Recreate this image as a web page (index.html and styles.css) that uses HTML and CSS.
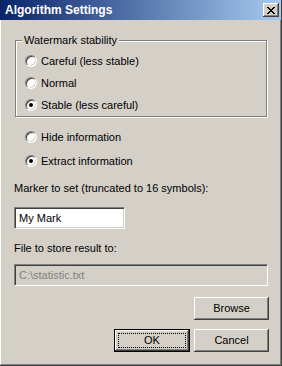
FILE: index.html
```html
<!DOCTYPE html>
<html lang="en">
<head>
  <meta charset="utf-8">
  <title>Algorithm Settings</title>
  <link rel="stylesheet" href="styles.css">
</head>
<body>
  <div class="window">
    <div class="titlebar">
      <span class="title">Algorithm Settings</span>
      <span class="close">
        <svg width="8" height="7" viewBox="0 0 8 7" shape-rendering="crispEdges">
          <rect x="0" y="0" width="2" height="1"/><rect x="6" y="0" width="2" height="1"/>
          <rect x="1" y="1" width="2" height="1"/><rect x="5" y="1" width="2" height="1"/>
          <rect x="2" y="2" width="4" height="1"/>
          <rect x="3" y="3" width="2" height="1"/>
          <rect x="2" y="4" width="4" height="1"/>
          <rect x="1" y="5" width="2" height="1"/><rect x="5" y="5" width="2" height="1"/>
          <rect x="0" y="6" width="2" height="1"/><rect x="6" y="6" width="2" height="1"/>
        </svg>
      </span>
    </div>
    <div class="client">
      <div class="group">
        <span class="group-title">Watermark stability</span>
        <div class="radio-row"><span class="radio"></span>Careful (less stable)</div>
        <div class="radio-row"><span class="radio"></span>Normal</div>
        <div class="radio-row"><span class="radio checked"></span>Stable (less careful)</div>
      </div>
      <div class="mode">
        <div class="radio-row tall"><span class="radio"></span>Hide information</div>
        <div class="radio-row tall"><span class="radio checked"></span>Extract information</div>
      </div>
      <div class="label first">Marker to set (truncated to 16 symbols):</div>
      <div class="field marker">My Mark</div>
      <div class="label">File to store result to:</div>
      <div class="field disabled">C:\statistic.txt</div>
      <div class="browse-row">
        <button class="btn">Browse</button>
      </div>
      <div class="button-row">
        <button class="btn default"><span class="focus">OK</span></button>
        <button class="btn">Cancel</button>
      </div>
    </div>
  </div>
</body>
</html>
```
FILE: styles.css
```css
body {
  margin: 0;
  font-family: "Liberation Sans", Arial, sans-serif;
  font-size: 11px;
  line-height: 13px;
  color: #000;
}

.window {
  box-sizing: border-box;
  width: 282px;
  height: 366px;
  display: flex;
  flex-direction: column;
  background: #d4d0c8;
  border-right: 1px solid #404040;
  border-bottom: 1px solid #404040;
}

.titlebar {
  height: 20px;
  flex: none;
  display: flex;
  align-items: center;
  justify-content: space-between;
  padding: 0 2px 0 5px;
  background: linear-gradient(to right, #0a246a, #a6caf0);
}

.title {
  color: #fff;
  font-weight: bold;
  font-size: 12px;
}

.close {
  width: 16px;
  height: 14px;
  display: flex;
  align-items: center;
  justify-content: center;
  background: #d4d0c8;
  box-shadow: inset -1px -1px #404040, inset 1px 1px #fff, inset -2px -2px #808080, inset 2px 2px #d4d0c8;
}

.close svg {
  fill: #000;
  margin-left: -1px;
}

.client {
  flex: 1;
  display: flex;
  flex-direction: column;
  border-left: 1px solid #fff;
  border-right: 1px solid #808080;
  border-bottom: 1px solid #808080;
  padding: 0 11px 0 13px;
}

.group {
  position: relative;
  margin: 20px 2px 0 1px;
  padding: 9px 0 0 9px;
  border: 1px solid #808080;
  box-shadow: inset 1px 1px #fff, 1px 1px #fff;
}

.group-title {
  position: absolute;
  top: -7px;
  left: 6px;
  padding: 0 2px;
  background: #d4d0c8;
}

.radio-row {
  height: 22px;
  display: flex;
  align-items: center;
}

.radio-row.tall {
  height: 24px;
}

.mode {
  margin: 8px 0 0 11px;
}

.radio {
  position: relative;
  box-sizing: border-box;
  width: 12px;
  height: 12px;
  margin-right: 4px;
  border-radius: 50%;
  background: #fff;
  border: 1px solid;
  border-color: #808080 #fff #fff #808080;
  box-shadow: inset 1px 1px #404040, inset -1px -1px #d4d0c8;
}

.radio.checked::after {
  content: "";
  position: absolute;
  left: 3px;
  top: 3px;
  width: 4px;
  height: 4px;
  border-radius: 50%;
  background: #000;
}

.label {
  margin-top: 13px;
}

.label.first {
  margin-top: 9px;
}

.field {
  box-sizing: border-box;
  height: 22px;
  margin-top: 12px;
  padding: 0 4px;
  display: flex;
  align-items: center;
  background: #fff;
  border: 1px solid;
  border-color: #808080 #fff #fff #808080;
  box-shadow: inset 1px 1px #404040, inset -1px -1px #d4d0c8;
}

.field.marker {
  width: 111px;
}

.field.disabled {
  margin-top: 9px;
  margin-right: 1px;
  background: #d4d0c8;
  color: #808080;
}

.browse-row {
  display: flex;
  justify-content: flex-end;
  margin-top: 11px;
}

.button-row {
  display: flex;
  justify-content: flex-end;
  gap: 4px;
  margin-top: 9px;
}

.btn {
  box-sizing: border-box;
  width: 75px;
  height: 23px;
  padding: 0;
  border: 0;
  background: #d4d0c8;
  font: inherit;
  color: #000;
  box-shadow: inset -1px -1px #404040, inset 1px 1px #fff, inset -2px -2px #808080, inset 2px 2px #d4d0c8;
}

.btn.default {
  width: 76px;
  display: flex;
  padding: 3px;
  border: 1px solid #000;
}

.focus {
  flex: 1;
  display: flex;
  align-items: center;
  justify-content: center;
  border: 1px dotted #000;
}
```
